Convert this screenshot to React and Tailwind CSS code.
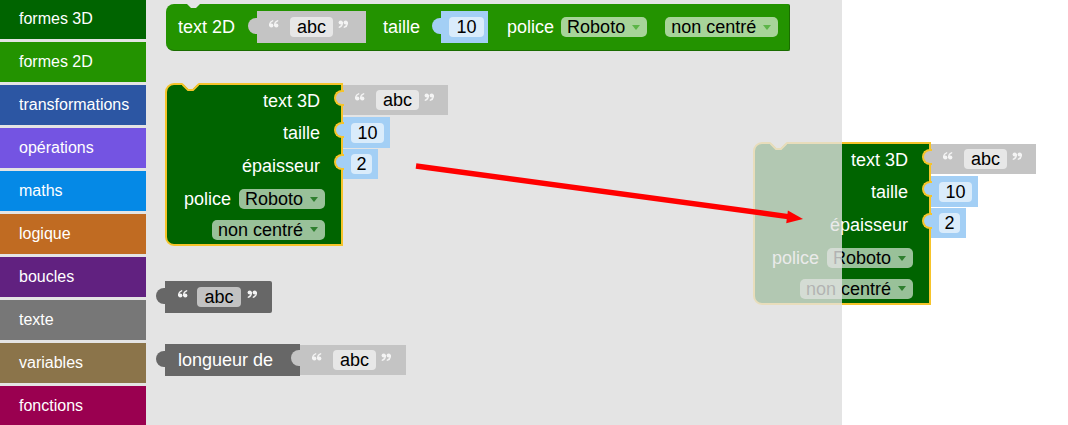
import React from "react";

const SIDEBAR = [
  ["formes 3D", "bg-[#006400]"],
  ["formes 2D", "bg-[#239300]"],
  ["transformations", "bg-[#2c56a3]"],
  ["opérations", "bg-[#7454e2]"],
  ["maths", "bg-[#0589e6]"],
  ["logique", "bg-[#c06b22]"],
  ["boucles", "bg-[#612180]"],
  ["texte", "bg-[#777777]"],
  ["variables", "bg-[#8b744a]"],
  ["fonctions", "bg-[#9a0050]"],
];

function Tab({ bg, selected, top = "top-[5px]" }) {
  return (
    <div
      className={`absolute left-[-9px] ${top} w-[10px] h-[16px] rounded-l-full ${bg} ${
        selected ? "border-2 border-r-0 border-[#f6c42a]" : ""
      }`}
    />
  );
}

function Field({ children, w }) {
  return (
    <span
      className={`inline-flex items-center justify-center h-[20px] ${w} rounded-[4px] bg-white/60 text-black text-[18px] leading-none`}
    >
      {children}
    </span>
  );
}

function OpenQ({ className = "" }) {
  return (
    <svg width="10" height="8" viewBox="0 0 10 8" className={`shrink-0 mb-[7px] ${className}`}>
      <g fill="#f4f4f4">
        <circle cx="2.3" cy="5.5" r="2.1" />
        <circle cx="7.3" cy="5.5" r="2.1" />
      </g>
      <g fill="none" stroke="#f4f4f4" strokeWidth="1.4" strokeLinecap="round">
        <path d="M0.6,5.2 Q0.7,1.6 3.6,0.8" />
        <path d="M5.6,5.2 Q5.7,1.6 8.6,0.8" />
      </g>
    </svg>
  );
}

function CloseQ({ className = "" }) {
  return (
    <svg width="10" height="8" viewBox="0 0 10 8" className={`shrink-0 mb-[7px] ${className}`}>
      <g fill="#f4f4f4">
        <circle cx="2.7" cy="2.5" r="2.1" />
        <circle cx="7.7" cy="2.5" r="2.1" />
      </g>
      <g fill="none" stroke="#f4f4f4" strokeWidth="1.4" strokeLinecap="round">
        <path d="M4.4,2.8 Q4.3,6.4 1.4,7.2" />
        <path d="M9.4,2.8 Q9.3,6.4 6.4,7.2" />
      </g>
    </svg>
  );
}

function Label({ children, className = "" }) {
  return <span className={`text-white text-[18px] leading-none whitespace-nowrap ${className}`}>{children}</span>;
}

function Arrow({ color }) {
  return (
    <svg width="8" height="5" viewBox="0 0 8 5" className="ml-[7px]">
      <polygon points="0,0 8,0 4,5" fill={color} />
    </svg>
  );
}

function Dropdown({ text, arrow, className = "" }) {
  return (
    <div
      className={`flex items-center h-[20px] rounded-[5px] bg-white/60 pl-[6px] pr-[7px] text-black text-[18px] leading-none whitespace-nowrap ${className}`}
    >
      <span>{text}</span>
      <Arrow color={arrow} />
    </div>
  );
}

function StringBlock({ w, h = "h-[31px]", selected, tabTop, className = "" }) {
  return (
    <div className={`relative flex items-center ${h} ${w} bg-[#c4c4c4] pl-[12px] ${className}`}>
      <Tab bg="bg-[#c4c4c4]" selected={selected} top={tabTop} />
      <OpenQ />
      <span className="ml-[11px] flex">
        <Field w="w-[43px]">abc</Field>
      </span>
      <CloseQ className="ml-[5px]" />
    </div>
  );
}

function NumberBlock({ value, w, fw, h = "h-[31px]", selected, tabTop }) {
  return (
    <div className={`relative flex items-center ${h} ${w} bg-[#a3cff5] pl-[8px]`}>
      <Tab bg="bg-[#a3cff5]" selected={selected} top={tabTop} />
      <Field w={fw}>{value}</Field>
    </div>
  );
}

function Notch({ left, stroke }) {
  return (
    <svg width="17" height="8" viewBox="0 0 17 8" className={`absolute top-[-2px] ${left}`}>
      <polygon points="0,0 6,6 11,6 17,0" fill="#e4e4e4" />
      {stroke ? <polyline points="0,1 6,7 11,7 17,1" fill="none" stroke="#f6c42a" strokeWidth="2" /> : null}
    </svg>
  );
}

function Block3D() {
  return (
    <div className="flex items-start">
      <div className="relative w-[178px] h-[163px] rounded-l-[9px] border-2 border-[#f6c42a] bg-[#006400] flex flex-col">
        <Notch left="left-[15px]" stroke />
        <div className="h-[32px] flex items-center justify-end pr-[21px]">
          <Label>text 3D</Label>
        </div>
        <div className="h-[32px] flex items-center justify-end pr-[21px]">
          <Label>taille</Label>
        </div>
        <div className="h-[34px] flex items-center justify-end pr-[21px]">
          <Label>épaisseur</Label>
        </div>
        <div className="h-[32px] flex items-center justify-end pr-[16px]">
          <Label>police</Label>
          <Dropdown text="Roboto" arrow="#2f7f2f" className="ml-[8px]" />
        </div>
        <div className="h-[29px] flex items-center justify-end pr-[16px]">
          <Dropdown text="non centré" arrow="#2f7f2f" />
        </div>
      </div>
      <div className="flex flex-col pt-[2px]">
        <div className="h-[32px]">
          <StringBlock w="w-[105px]" h="h-[30px]" selected />
        </div>
        <div className="h-[32px]">
          <NumberBlock value="10" w="w-[47px]" fw="w-[33px]" selected />
        </div>
        <div className="h-[34px]">
          <NumberBlock value="2" w="w-[35px]" fw="w-[21px]" h="h-[30px]" selected />
        </div>
      </div>
    </div>
  );
}

export default function App() {
  return (
    <div className="flex w-[1068px] h-[425px] overflow-hidden bg-white font-['Liberation_Sans',Arial,sans-serif]">
      <div className="w-[146px] shrink-0 bg-[#e4e4e4] flex flex-col gap-[3px] -mt-[1px]">
        {SIDEBAR.map(([t, c]) => (
          <div key={t} className={`h-[40px] shrink-0 flex items-center pl-[19px] text-white text-[16px] ${c}`}>
            {t}
          </div>
        ))}
      </div>

      <div className="relative flex-1 bg-white">
        <div className="w-[696px] h-full bg-[#e4e4e4]" />

        {/* text 2D block */}
        <div className="absolute left-[20px] top-[4px] flex items-center h-[47px] pl-[12px] pr-[11px] bg-[#239300] rounded-l-[8px] rounded-r-[2px] border-r border-b border-[#1a6c00]">
          <Notch left="left-[19px]" />
          <Label>text 2D</Label>
          <StringBlock w="w-[109px]" h="h-[32px]" tabTop="top-[7px]" className="ml-[22px]" />
          <Label className="ml-[17px]">taille</Label>
          <div className="ml-[21px]">
            <NumberBlock value="10" w="w-[47px]" fw="w-[35px]" h="h-[32px]" tabTop="top-[7px]" />
          </div>
          <Label className="ml-[19px]">police</Label>
          <Dropdown text="Roboto" arrow="#5cb548" className="ml-[7px]" />
          <Dropdown text="non centré" arrow="#5cb548" className="ml-[18px]" />
        </div>

        {/* text 3D block (left) */}
        <div className="absolute left-[19px] top-[83px]">
          <Block3D />
        </div>

        {/* abc block */}
        <div className="absolute left-[19px] top-[281px] flex items-center h-[32px] w-[107px] pl-[13px] bg-[#676767] rounded-r-[2px]">
          <Tab bg="bg-[#676767]" top="top-[7px]" />
          <OpenQ />
          <span className="ml-[9px] flex">
            <Field w="w-[44px]">abc</Field>
          </span>
          <CloseQ className="ml-[6px]" />
        </div>

        {/* longueur de block */}
        <div className="absolute left-[19px] top-[344px] flex items-start">
          <div className="relative flex items-center h-[32px] w-[135px] pl-[13px] bg-[#676767]">
            <Tab bg="bg-[#676767]" top="top-[7px]" />
            <Label>longueur de</Label>
          </div>
          <StringBlock w="w-[106px]" h="h-[30px]" className="mt-[1px]" />
        </div>

        {/* dragged text 3D block (right) */}
        <div className="absolute left-[607px] top-[142px]">
          <Block3D />
        </div>
        <div className="absolute left-[598px] top-[136px] w-[98px] h-[176px] bg-[rgba(228,228,228,0.78)]" />

        {/* red arrow */}
        <svg className="absolute left-0 top-0" width="922" height="425" viewBox="0 0 922 425">
          <line x1="270" y1="166" x2="642" y2="216.6" stroke="#ff0000" strokeWidth="5.5" />
          <polygon points="657,219 640.2,223.2 641.9,210.6" fill="#ff0000" />
        </svg>
      </div>
    </div>
  );
}
